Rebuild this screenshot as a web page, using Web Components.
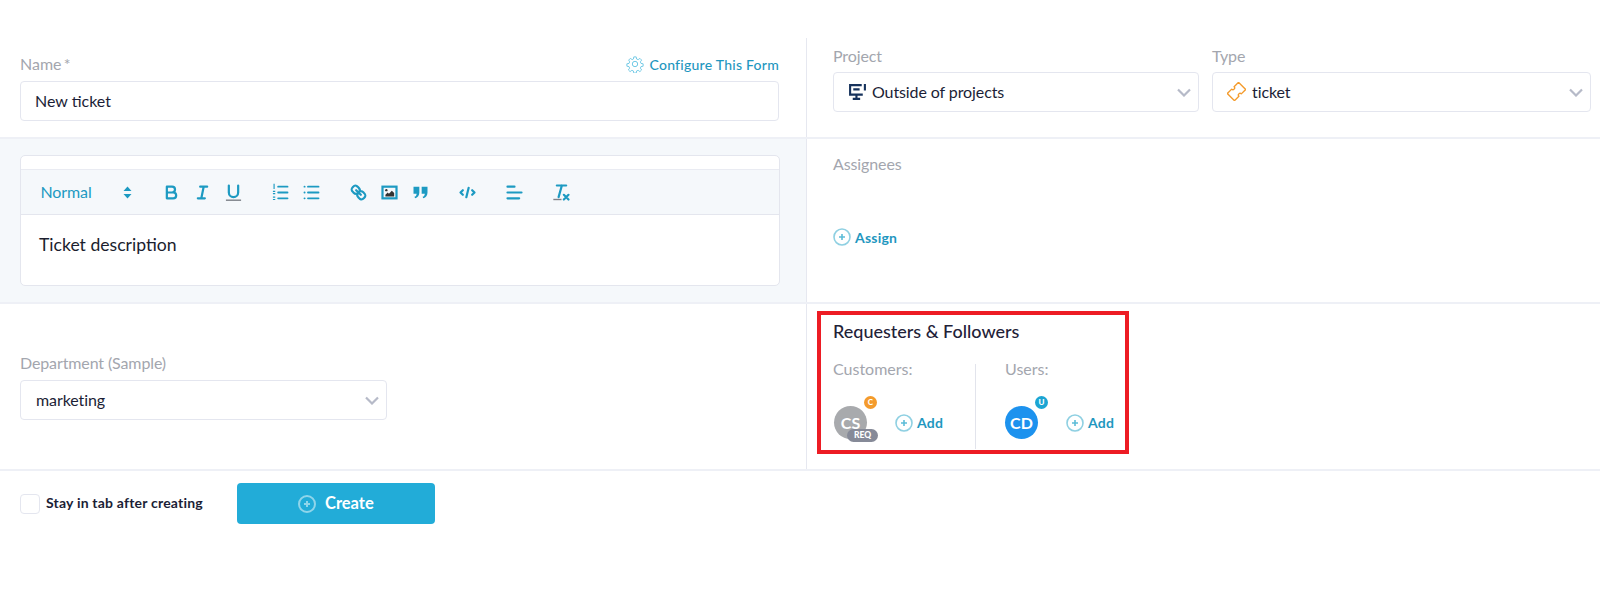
<!DOCTYPE html>
<html lang="en">
<head>
<meta charset="UTF-8">
<title>New ticket</title>
<style>
    html, body { margin: 0; background: #fff; }
    body { font-family: Lato, "Liberation Sans", sans-serif; color: #1b1e36; }
</style>
</head>
<body>
    <!-- reusable pieces -->
    <template id="tmpl-row">
        <style>
            :host { display: grid; grid-template-columns: 806px 1fr; border-bottom: 2px solid #eef0f6; box-sizing: border-box; }
            :host([tinted]) .left { background: #f5f8fb; }
            .left { box-sizing: border-box; padding: var(--left-pad, 0 27px 0 20px); min-width: 0; }
            .right { box-sizing: border-box; border-left: 1px solid #e6e8f0; padding: var(--right-pad, 0 10px 0 26px); min-width: 0; }
        </style>
        <div class="left"><slot name="left"></slot></div>
        <div class="right"><slot name="right"></slot></div>
    </template>

    <template id="tmpl-select">
        <style>
            :host { display: block; }
            label { display: block; font-size: 16px; line-height: 20px; letter-spacing: -.12px; color: #a3a6ae; margin-bottom: var(--label-gap, 6px); }
            .box { display: flex; align-items: center; height: 40px; box-sizing: border-box; border: 1px solid #e4e6ef; border-radius: 4px; background: #fff; padding: 0 7px 2px var(--box-pad, 15px); font-size: 16px; letter-spacing: -.1px; gap: 5px; }
            .val { flex: 1; }
            ::slotted(svg) { flex: none; }
            .chev { width: 14px; height: 9px; fill: none; stroke: #b6bac8; stroke-width: 2.2; margin-top: 2px; }
        </style>
        <label></label>
        <div class="box">
            <slot name="icon"></slot>
            <span class="val"><slot></slot></span>
            <svg class="chev" viewBox="0 0 14 9"><polyline points="1 1.5 7 7.5 13 1.5"/></svg>
        </div>
    </template>

    <template id="tmpl-add">
        <style>
            :host { display: inline-flex; align-items: center; gap: 4px; color: #1f97bf; font-size: 14px; font-weight: 700; letter-spacing: .2px; }
            svg { width: 18px; height: 18px; fill: none; stroke: #8fd0e2; stroke-width: 1.6; }
        </style>
        <svg viewBox="0 0 18 18"><circle cx="9" cy="9" r="8"/><path d="M9 6v6M6 9h6" stroke="#5cbcd8"/></svg>
        <span><slot></slot></span>
    </template>

    <template id="tmpl-avatar">
        <style>
            :host { display: block; flex: none; position: relative; width: 33px; height: 33px; border-radius: 50%; background: var(--bg, #a8aaad); color: #fff; font-size: 16px; font-weight: 700; line-height: 33px; text-align: center; }
            .badge { position: absolute; left: 30px; top: -10px; width: 13px; height: 13px; border-radius: 50%; background: var(--badge, #f49b2c); font-size: 8px; line-height: 13px; font-weight: 900; }
            .req { position: absolute; left: 13px; top: 23px; width: 31px; height: 13px; border-radius: 7px; background: #868a98; font-size: 8.5px; line-height: 13px; font-weight: 900; }
        </style>
        <slot></slot>
        <span class="badge"></span>
    </template>

    <template id="tmpl-toolbar">
        <style>
            :host { display: flex; align-items: center; height: 46px; box-sizing: border-box; padding-left: 19.5px; background: #f5f8fb; border-top: 1px solid #e9ebf2; border-bottom: 1px solid #e4e6ee; color: #1d9ac2; }
            .picker { display: flex; align-items: center; justify-content: space-between; width: 91.5px; margin-right: 23.5px; padding-bottom: 2px; font-size: 16px; letter-spacing: -.1px; }
            .group { display: flex; margin-right: 16px; }
            .group span { display: flex; width: 31px; justify-content: center; }
            svg { width: 21px; height: 21px; fill: none; stroke: #1d9ac2; stroke-width: 1.9; stroke-linecap: round; stroke-linejoin: round; }
            svg .f { fill: #1d9ac2; stroke: none; }
            svg .u { fill: #7d8088; stroke: none; }
            .sort { width: 9px; height: 13px; margin-top: 2px; }
        </style>
        <div class="picker">Normal
            <svg class="sort" viewBox="0 0 9 13"><path class="f" d="M4.5 0.5 8.5 5H.5zM4.5 12.5.5 8h8z"/></svg>
        </div>
        <div class="group">
            <span><svg viewBox="0 0 18 18"><path d="M5,4H9.5A2.5,2.5,0,0,1,9.5,9H5ZM5,9h5.5A2.5,2.5,0,0,1,10.5,14H5Z"/></svg></span>
            <span><svg viewBox="0 0 18 18"><path d="M7 4h6M5 14h6M8 14 10 4"/></svg></span>
            <span><svg viewBox="0 0 18 18"><path d="M5,3V9a4,4,0,0,0,8,0V3"/><rect class="u" x="2.5" y="15" width="13" height="1.2"/></svg></span>
        </div>
        <div class="group">
            <span><svg viewBox="0 0 18 18"><path stroke-width="1.6" d="M7 4h8M7 9h8M7 14h8"/><path class="f" d="M3 1.500h1v4.500H3zM2.500 7.500h2v1h-2zM2.500 9.500h2v1h-2zM2.500 12.500h2v1h-2zM2.500 14.500h2v1h-2z"/></svg></span>
            <span><svg viewBox="0 0 18 18"><path stroke-width="1.6" d="M6 4h9M6 9h9M6 14h9M3 4h.1M3 9h.1M3 14h.1"/></svg></span>
        </div>
        <div class="group">
            <span><svg viewBox="0 0 18 18"><path d="M7 7 11 11M8.9,4.577a3.476,3.476,0,0,1,.36,4.679A3.476,3.476,0,0,1,4.577,8.9C3.185,7.5,2.035,6.4,4.217,4.217S7.5,3.185,8.9,4.577ZM13.423,9.1a3.476,3.476,0,0,0-4.679-.36,3.476,3.476,0,0,0,.36,4.679c1.392,1.392,2.5,2.542,4.679.36S14.815,10.5,13.423,9.1Z"/></svg></span>
            <span><svg viewBox="0 0 18 18"><rect x="3" y="4" width="12" height="10" stroke-linejoin="miter"/><circle class="u" cx="6.300" cy="7" r="1" style="fill:#333"/><path class="u" style="fill:#333" d="M5.500 12.500V11l2-2 1 1 2.500-2.500 2 2v3z"/></svg></span>
            <span><svg viewBox="0 0 18 18"><path class="f" d="M3 4h5v5c0 2.600-1.400 4.400-3.600 5l-.6-1.300c1.200-.5 1.800-1.300 1.900-2.700H3zM10 4h5v5c0 2.600-1.400 4.400-3.600 5l-.6-1.300c1.200-.5 1.800-1.300 1.900-2.700H10z"/></svg></span>
        </div>
        <div class="group">
            <span><svg viewBox="0 0 18 18"><path d="M5 7 3 9l2 2M13 7l2 2-2 2M10 5 8 13"/></svg></span>
        </div>
        <div class="group">
            <span><svg viewBox="0 0 18 18"><path d="M3 4h6M3 9h12M3 14h10"/></svg></span>
        </div>
        <div class="group">
            <span><svg viewBox="0 0 18 18"><path d="M5 3h8M6.500 13 9.300 3M11 11l4 4M15 11l-4 4" /><rect class="u" x="2" y="14.400" width="7" height="1.200"/></svg></span>
        </div>
    </template>

    <template id="tmpl-editor">
        <style>
            :host { display: block; background: #fff; border: 1px solid #e4e6ee; border-radius: 5px; padding-top: 13px; height: 131px; box-sizing: border-box; overflow: hidden; }
            .body { padding: 19px 18px; font-size: 17.6px; line-height: 22px; color: #1b1e2e; }
        </style>
        <file-toolbar></file-toolbar>
        <div class="body"><slot></slot></div>
    </template>

    <template id="tmpl-people">
        <style>
            :host { display: block; width: 312px; box-sizing: border-box; border: 4px solid #ed1c24; padding: 3px 0 0 12px; height: 143px; }
            h3 { margin: 0; font-size: 18px; font-weight: 500; line-height: 26px; color: #1f2238; }
            .cols { display: grid; grid-template-columns: 142px 1fr; margin-top: 20px; height: 85px; }
            .col { display: flex; flex-direction: column; font-size: 16px; line-height: 10px; color: #a3a6ae; }
            .col + .col { border-left: 1px solid #e2e4ec; padding-left: 29px; }
            .who { display: flex; align-items: center; margin-top: 32px; color: #1b1e36; line-height: 18px; }
        </style>
        <h3>Requesters &amp; Followers</h3>
        <div class="cols">
            <div class="col"><slot name="a-label"></slot><div class="who"><slot name="a"></slot></div></div>
            <div class="col"><slot name="b-label"></slot><div class="who"><slot name="b"></slot></div></div>
        </div>
    </template>

    <template id="tmpl-create">
        <style>
            :host { display: flex; align-items: center; justify-content: center; gap: 9px; width: 198px; height: 41px; border-radius: 4px; background: #22acd8; color: #fff; font-size: 16.5px; font-weight: 700; }
            svg { width: 18px; height: 18px; fill: none; stroke: #8fd5ea; stroke-width: 2; }
            span { padding-bottom: 2px; }
        </style>
        <svg viewBox="0 0 18 18"><circle cx="9" cy="9" r="8"/><path d="M9 6v6M6 9h6"/></svg>
        <span><slot></slot></span>
    </template>

    <template id="tmpl-check">
        <style>
            :host { display: flex; align-items: center; gap: 6px; font-size: 14px; font-weight: 700; letter-spacing: .2px; color: #1b1e36; }
            i { display: block; width: 20px; height: 20px; box-sizing: border-box; border: 1px solid #e4e6ef; border-radius: 4px; background: #fff; }
            span { padding-bottom: 2px; }
        </style>
        <i></i><span><slot></slot></span>
    </template>

    <template id="tmpl-page">
        <style>
            :host { display: block; padding-top: 38px; }
            .r1 { --right-pad: 8px 10px 0 26px; height: 101px; }
            .r1-left { padding-top: 13px; }
            .name-head { display: flex; justify-content: space-between; align-items: center; height: 24px; margin-bottom: 6px; font-size: 16px; color: #a3a6ae; word-spacing: -2px; }
            .cfg { display: flex; align-items: center; gap: 5px; font-size: 14px; font-weight: 500; color: #1f97bf; letter-spacing: .25px; word-spacing: 0; margin-top: 2px; }
            .cfg svg { width: 18px; height: 18px; fill: none; stroke: #62c3e2; stroke-width: 1.2; }
            .name-input { height: 40px; box-sizing: border-box; border: 1px solid #e4e6ef; border-radius: 4px; padding: 0 14px; line-height: 38px; font-size: 16px; }
            .pair { display: grid; grid-template-columns: 366px 379px; gap: 13px; --box-pad: 14px; }
            .r2 { --left-pad: 16px 26px 0 20px; --right-pad: 0 10px 0 26px; height: 165px; }
            .lbl { display: block; font-size: 16px; line-height: 20px; letter-spacing: -.12px; color: #a3a6ae; padding-top: 15px; }
            .assign { margin-top: 54px; display: inline-flex; }
            .r3 { --left-pad: 0 0 0 20px; --right-pad: 7px 0 0 10px; height: 167px; }
            .dept { width: 367px; margin-top: 49px; --label-gap: 7px; }
            .foot { display: flex; align-items: center; padding: 12px 0 0 20px; gap: 34px; }
            .ava-first { margin-left: 1px; }
        </style>
        <file-row class="r1">
            <div slot="left" class="r1-left">
                <div class="name-head">
                    <span>Name *</span>
                    <span class="cfg">
                        <svg viewBox="0 0 24 24"><circle cx="12" cy="12" r="3.600"/><path d="M10.300 2h3.400l.5 3 2.200.9 2.500-1.800 2.400 2.400-1.800 2.500.9 2.200 3 .5v3.400l-3 .5-.9 2.200 1.800 2.500-2.400 2.400-2.500-1.800-2.200.9-.5 3h-3.400l-.5-3-2.200-.9-2.500 1.800-2.400-2.400 1.800-2.500-.9-2.200-3-.5v-3.400l3-.5.9-2.200L3.100 6.500l2.400-2.400L8 5.900l1.800-.9z" transform="translate(.6 .6) scale(.95)"/></svg>
                        Configure This Form
                    </span>
                </div>
                <div class="name-input">New ticket</div>
            </div>
            <div slot="right" class="pair">
                <file-select label="Project">
                    <svg slot="icon" width="19" height="19" viewBox="0 0 18 18" fill="none" stroke="#16325c" stroke-width="2"><path d="M13 3H2v9h12M5 7h6M8 12v4M4.500 16h7M16 2v6"/></svg>
                    Outside of projects
                </file-select>
                <file-select label="Type">
                    <svg slot="icon" style="margin-right:1px" width="19" height="19" viewBox="0 0 18 18" fill="none" stroke="#f49b2c" stroke-width="1.300" stroke-linejoin="round"><path transform="rotate(-45 9 9)" d="M1.500 4.200H7.400a1.600 1.600 0 0 0 3.200 0H16.500V13.800H10.600a1.600 1.600 0 0 0-3.200 0H1.500z"/></svg>
                    ticket
                </file-select>
            </div>
        </file-row>
        <file-row class="r2" tinted>
            <div slot="left">
                <file-editor>Ticket description</file-editor>
            </div>
            <div slot="right">
                <span class="lbl">Assignees</span>
                <file-add class="assign">Assign</file-add>
            </div>
        </file-row>
        <file-row class="r3">
            <div slot="left">
                <file-select class="dept" label="Department (Sample)">marketing</file-select>
            </div>
            <div slot="right">
                <file-people>
                    <span slot="a-label">Customers:</span>
                    <file-avatar slot="a" class="ava-first" badge="C" req>CS</file-avatar>
                    <file-add slot="a" style="margin-left:28px">Add</file-add>
                    <span slot="b-label">Users:</span>
                    <file-avatar slot="b" badge="U" style="--bg:#1d92ee;--badge:#1ca5d3">CD</file-avatar>
                    <file-add slot="b" style="margin-left:28px">Add</file-add>
                </file-people>
            </div>
        </file-row>
        <div class="foot">
            <file-check>Stay in tab after creating</file-check>
            <file-create>Create</file-create>
        </div>
    </template>

    <file-page></file-page>

    <script>
        function plain(name, id) {
            customElements.define(name, class extends HTMLElement {
                connectedCallback() {
                    if (this.shadowRoot) return
                    this.attachShadow({mode: 'open'}).append(document.getElementById(id).content.cloneNode(true))
                }
            })
        }
        plain('file-row', 'tmpl-row')
        plain('file-add', 'tmpl-add')
        plain('file-toolbar', 'tmpl-toolbar')
        plain('file-editor', 'tmpl-editor')
        plain('file-people', 'tmpl-people')
        plain('file-create', 'tmpl-create')
        plain('file-check', 'tmpl-check')
        plain('file-page', 'tmpl-page')

        customElements.define('file-select', class extends HTMLElement {
            connectedCallback() {
                this.attachShadow({mode: 'open'}).append(document.getElementById('tmpl-select').content.cloneNode(true))
                this.shadowRoot.querySelector('label').textContent = this.getAttribute('label')
            }
        })
        customElements.define('file-avatar', class extends HTMLElement {
            connectedCallback() {
                this.attachShadow({mode: 'open'}).append(document.getElementById('tmpl-avatar').content.cloneNode(true))
                this.shadowRoot.querySelector('.badge').textContent = this.getAttribute('badge')
                if (this.hasAttribute('req')) {
                    const r = document.createElement('span')
                    r.className = 'req'
                    r.textContent = 'REQ'
                    this.shadowRoot.append(r)
                }
            }
        })
    </script>
</body>
</html>
